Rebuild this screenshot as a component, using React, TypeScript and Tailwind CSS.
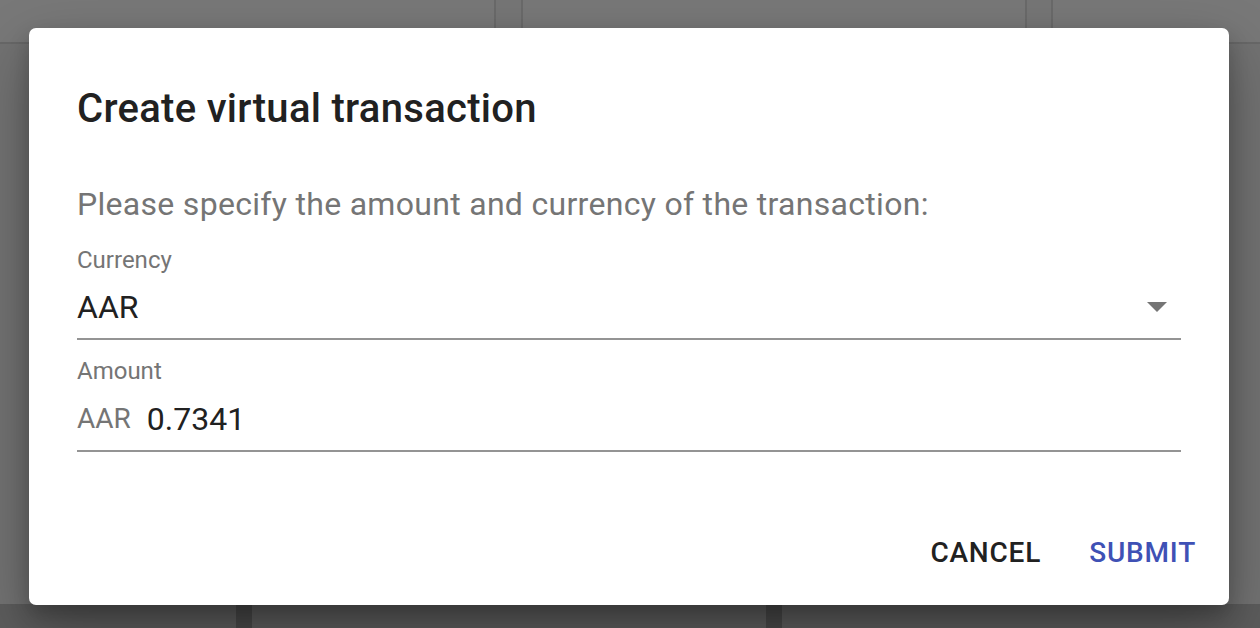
import React from 'react'

const font = { fontFamily: 'Roboto, "Noto Sans", sans-serif' }

function Backdrop() {
  return (
    <div className="absolute inset-0 flex flex-col bg-[#727272]">
      <div className="flex h-[44px] border-b-2 border-[#686868] bg-[#787878]">
        <div className="w-[494px]" />
        <div className="w-[2px] bg-[#6a6a6a]" />
        <div className="w-[25px] bg-[#767676]" />
        <div className="w-[2px] bg-[#6a6a6a]" />
        <div className="w-[502px]" />
        <div className="w-[2px] bg-[#6a6a6a]" />
        <div className="w-[24px] bg-[#767676]" />
        <div className="w-[2px] bg-[#6a6a6a]" />
        <div className="flex-1" />
      </div>
      <div className="flex-1" />
      <div className="flex h-[24px] bg-[#5c5c5c]">
        <div className="w-[236px]" />
        <div className="w-[16px] bg-[#484848]" />
        <div className="w-[514px]" />
        <div className="w-[16px] bg-[#484848]" />
        <div className="flex-1" />
      </div>
    </div>
  )
}

function Field({ label, children }: { label: string; children: React.ReactNode }) {
  return (
    <div className="border-b-2 border-[#949494]">
      <div className="text-[24px] leading-[28px] text-[#757575]">{label}</div>
      {children}
    </div>
  )
}

export default function App() {
  return (
    <div className="relative h-[628px] w-[1260px] overflow-hidden" style={font}>
      <Backdrop />
      <div className="absolute inset-0 flex items-center justify-center pt-[5px] pr-[2px]">
        <div className="flex h-[577px] w-[1200px] flex-col rounded-[7px] bg-white shadow-[0_24px_60px_rgba(0,0,0,0.3),0_10px_20px_rgba(0,0,0,0.2)]">
          <div className="px-[48px] pt-[57px]">
            <h2 className="text-[40px] font-medium leading-[47px] tracking-[0.3px] text-[#212121]">
              Create virtual transaction
            </h2>
            <p className="mt-[53px] text-[32px] leading-[38px] tracking-[0.3px] text-[#757575]">
              Please specify the amount and currency of the transaction:
            </p>
            <div className="mt-[23px]">
              <Field label="Currency">
                <div className="mt-[14px] flex items-center justify-between pb-[12px]">
                  <span className="text-[32px] leading-[38px] text-[#212121]">AAR</span>
                  <svg width="20" height="10" viewBox="0 0 20 10" className="mr-[14px]">
                    <path d="M0 0 L10 10 L20 0 Z" fill="#757575" />
                  </svg>
                </div>
              </Field>
            </div>
            <div className="mt-[17px]">
              <Field label="Amount">
                <div className="mt-[15px] flex items-center gap-[16px] pb-[12px]">
                  <span className="text-[28px] leading-[38px] text-[#757575]">AAR</span>
                  <span className="text-[32px] leading-[38px] text-[#212121]">0.7341</span>
                </div>
              </Field>
            </div>
          </div>
          <div className="mt-auto flex justify-end gap-[16px] pr-[17px] pb-[17px]">
            <button className="h-[72px] min-w-[128px] px-[16px] text-[28px] font-medium uppercase leading-[49px] tracking-[0.8px] text-[#212121]">
              Cancel
            </button>
            <button className="h-[72px] min-w-[128px] px-[16px] text-[28px] font-medium uppercase leading-[49px] tracking-[0.8px] text-[#3f51b5]">
              Submit
            </button>
          </div>
        </div>
      </div>
    </div>
  )
}
